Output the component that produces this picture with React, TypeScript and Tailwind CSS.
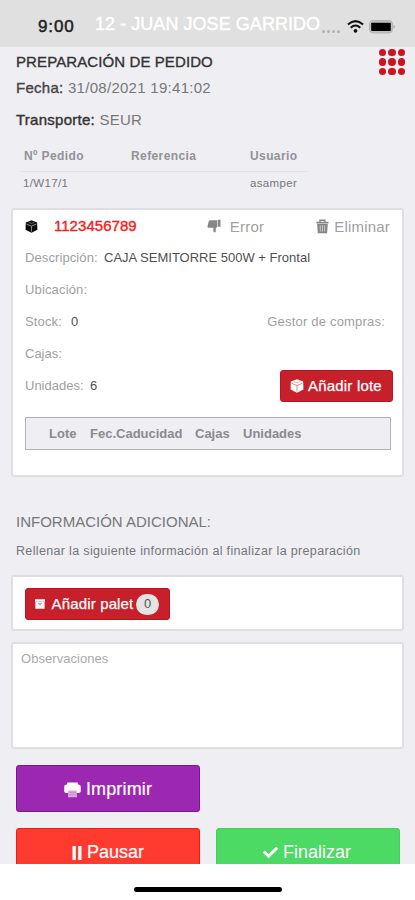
import React from "react";
import { FaCheck } from "react-icons/fa";

function CubeIcon({ className, line }: { className: string; line: string }) {
  return (
    <svg viewBox="0 0 14 14" className={className}>
      <path fill="currentColor" d="M7 0.2 13.2 2.6 13.4 10.6 7 13.8 0.6 10.6 0.8 2.6Z" />
      <path fill="none" stroke={line} strokeWidth="1" d="M1.5 4.2 7 6.6 12.5 4.2M7 6.6V12.6" />
      <path fill="none" stroke={line} strokeWidth="0.7" d="M4 2.6 7 3.7 10 2.6" />
    </svg>
  );
}

function ThumbsDownIcon() {
  return (
    <svg viewBox="0 0 14 14" className="h-[14px] w-[14px]">
      <path fill="#878787" d="M3.2 1.2H10.4V7.6L8.8 9.4V12.6Q8.6 13.6 7.4 13.4Q6.4 13.2 6.4 12V8.8H1.6Q0.2 8.6 0.5 7.2L1.6 2.6Q2 1.2 3.2 1.2ZM11 0.6H13.6V7.8H11Z" />
    </svg>
  );
}

function TrashIcon() {
  return (
    <svg viewBox="0 0 13 15" className="h-[15px] w-[13px] text-[#858585]">
      <path fill="none" stroke="currentColor" strokeWidth="1.3" d="M4 3V1.2H9V3" />
      <path fill="currentColor" d="M0.5 2.6H12.5V4.6H0.5ZM1.2 5H11.8L11.2 14.2H1.8Z" />
      <path stroke="#fff" strokeWidth="0.6" d="M4.3 6.3V12.6M6.5 6.3V12.6M8.7 6.3V12.6" />
    </svg>
  );
}

function PrinterIcon() {
  return (
    <svg viewBox="0 0 17 16" className="h-4 w-[17px]">
      <path fill="#fff" d="M3.2 0.5H13.8V3H3.2ZM2.3 2.6H14.7Q16.8 3 16.8 5V9.2Q16.8 11 14.7 11H2.3Q0.2 11 0.2 9.2V5Q0.2 3 2.3 2.6Z" />
      <path fill="#d9a9e0" d="M4.2 8.5H12.8L13 15.3H4Z" />
      <path stroke="#c27ccd" strokeWidth="0.7" d="M5 10.4H12M5 12.6H12" />
    </svg>
  );
}

function ArchiveIcon() {
  return (
    <svg viewBox="0 0 10 10" className="h-[10px] w-[10px]">
      <path fill="#fff" d="M0 0.2H10V2.8H0ZM0.4 3.1H9.6V9.8H0.4Z" />
      <path fill="none" stroke="#c8202b" strokeWidth="0.9" d="M3.4 4.6 5 5.4 6.6 4.6" />
    </svg>
  );
}

function StatusBar() {
  return (
    <header className="flex h-[47px] items-start bg-[#e0e0e0]">
      <span className="ml-[38px] mt-[16px] w-[57px] text-[17px] leading-[22px] tracking-[0.9px] text-[#222] [-webkit-text-stroke:0.5px_#222]">9:00</span>
      <span className="mt-[13px] w-[227px] text-[18px] leading-[22px] tracking-[0.05px] text-white [-webkit-text-stroke:0.4px_#fff]">12 - JUAN JOSE GARRIDO</span>
      <div className="mt-[30px] flex w-[25px] gap-[2px]">
        {[0, 1, 2, 3].map((i) => (
          <i key={i} className="size-[3px] rounded-full bg-[#b3b3b3]" />
        ))}
      </div>
      <svg viewBox="0 0 17 13" className="mt-[20px] h-[13px] w-[17px]">
        <path fill="none" stroke="#111" strokeWidth="2" d="M0.9 4.5Q8.5 -2.3 16.1 4.5M3.7 7.7Q8.5 3.4 13.3 7.7" />
        <circle cx="8.5" cy="10.8" r="1.9" fill="#111" />
      </svg>
      <svg viewBox="0 0 27 14" className="ml-[5px] mt-[20px] h-[14px] w-[27px]">
        <rect x="0.5" y="0.5" width="23" height="12.5" rx="3.5" fill="#c2c2c2" stroke="#b4b4b4" />
        <rect x="2.2" y="2.8" width="19.6" height="8.2" rx="0.8" fill="#000" />
        <path fill="#999" d="M24.6 4.4Q27 6.7 24.6 9Z" />
      </svg>
    </header>
  );
}

export default function App() {
  return (
    <div className="flex h-[900px] w-[415px] flex-col overflow-hidden bg-white font-['Liberation_Sans',Arial,sans-serif] whitespace-nowrap">
      <StatusBar />
      <main className="h-[817px] overflow-hidden bg-[#efeef3] text-[#777]">
        <div className="flex h-[28px] justify-between pl-[16px] pr-[10px]">
          <h1 className="mt-[5px] text-[15px] leading-[20px] tracking-[0.1px] text-[#333] [-webkit-text-stroke:0.35px_#333]">PREPARACIÓN DE PEDIDO</h1>
          <div className="mt-[2px] grid size-[26px] grid-cols-3 gap-[2px]">
            {[0, 1, 2, 3, 4, 5, 6, 7, 8].map((i) => (
              <i key={i} className="rounded-full bg-[#cc1420]" />
            ))}
          </div>
        </div>
        <p className="mt-[3px] pl-[16px] text-[15px] leading-[20px] tracking-[0.28px]"><span className="text-[#444] [-webkit-text-stroke:0.35px_#444]">Fecha:</span> 31/08/2021 19:41:02</p>
        <p className="mt-[12px] pl-[16px] text-[15px] leading-[20px] tracking-[0.26px]"><span className="text-[#333] [-webkit-text-stroke:0.4px_#333]">Transporte:</span> SEUR</p>

        <div className="ml-[20px] mt-[18px] grid w-[288px] grid-cols-[73px_153px_62px] text-[12px] font-bold leading-[16px] tracking-[0.4px] text-[#929297]">
          <span className="pl-[4px]">Nº Pedido</span>
          <span className="pl-[38px]">Referencia</span>
          <span className="pl-[4px]">Usuario</span>
        </div>
        <div className="ml-[20px] mt-[7px] grid w-[288px] grid-cols-[73px_153px_62px] border-t border-[#e4e3e8] pt-[3px] text-[11.5px] leading-[16px] tracking-[0.35px] text-[#77777b]">
          <span className="pl-[3px]">1/W17/1</span>
          <span />
          <span className="pl-[4px]">asamper</span>
        </div>

        <section className="mx-[11px] mt-[17px] h-[269px] rounded-[3px] border-2 border-[#dfdfe3] bg-white px-[12px] text-[13px] leading-[16px] text-[#a0a0a0]">
          <div className="flex h-[32px] items-center">
            <CubeIcon className="h-[13px] w-[13px] text-[#0a0a0a]" line="#999" />
            <span className="ml-[16px] w-[154px] text-[15px] tracking-[0.05px] text-[#f51d20] [-webkit-text-stroke:0.4px_#f51d20]">1123456789</span>
            <ThumbsDownIcon />
            <span className="ml-[9px] w-[87px] pt-[1px] text-[15px] tracking-[0.2px]">Error</span>
            <TrashIcon />
            <span className="ml-[5px] pt-[1px] text-[15px] tracking-[0.2px]">Eliminar</span>
          </div>
          <div className="flex h-[32px] items-center"><span className="w-[79px] tracking-[0.1px]">Descripción:</span><span className="text-[#505050]">CAJA SEMITORRE 500W + Frontal</span></div>
          <div className="flex h-[32px] items-center tracking-[0.15px]">Ubicación:</div>
          <div className="flex h-[32px] items-center"><span className="w-[46px] tracking-[0.15px]">Stock:</span><span className="text-[#505050]">0</span><span className="ml-auto mr-[5px] tracking-[0.2px]">Gestor de compras:</span></div>
          <div className="flex h-[32px] items-center">Cajas:</div>
          <div className="flex h-[32px] items-center"><span className="w-[65px]">Unidades:</span><span className="text-[#505050]">6</span>
            <button className="-mr-[3px] -mt-px ml-auto flex h-[32px] w-[113px] items-center rounded-[3px] border border-[#b91520] bg-[#c8202b] pl-[9px] text-[15px] tracking-[0.2px] text-white [-webkit-text-stroke:0.25px_#fff]">
              <CubeIcon className="mr-[4px] h-[14px] w-[14px]" line="#e0868c" />Añadir lote
            </button>
          </div>
          <div className="mt-[15px] flex h-[33px] w-[366px] items-center border border-[#b0b0b4] bg-[#efeef3] pl-[23px] text-[13px] font-bold text-[#8a8a8f]">
            <span className="w-[41px]">Lote</span><span className="w-[105px]">Fec.Caducidad</span><span className="w-[48px]">Cajas</span><span>Unidades</span>
          </div>
        </section>

        <h2 className="mt-[35px] pl-[16px] text-[15px] leading-[20px]">INFORMACIÓN ADICIONAL:</h2>
        <p className="mt-[11px] pl-[16px] text-[12.5px] leading-[16px] tracking-[0.34px] text-[#757579]">Rellenar la siguiente información al finalizar la preparación</p>

        <section className="mx-[11px] mt-[16px] h-[56px] rounded-[3px] border-2 border-[#dfdfe3] bg-white pl-[12px] pt-[11px]">
          <button className="flex h-[32px] w-[145px] items-center rounded-[3px] border border-[#b91520] bg-[#c8202b] pl-[9px] text-[15px] text-white [-webkit-text-stroke:0.25px_#fff]">
            <ArchiveIcon /><span className="ml-[4px] w-[87px] tracking-[0.15px]">Añadir palet</span>
            <span className="flex h-[21px] w-[23px] items-center justify-center rounded-full bg-[#e3e3e3] text-[13px] text-[#555] [-webkit-text-stroke:0]">0</span>
          </button>
        </section>
        <section className="mx-[11px] mt-[11px] h-[107px] rounded-[3px] border-2 border-[#dfdfe3] bg-white pl-[8px] pt-[7px] text-[13px] leading-[16px] tracking-[0.05px] text-[#aaa]">Observaciones</section>

        <div className="mt-[16px] grid grid-cols-[184px_184px] gap-x-[16px] gap-y-[16px] pl-[16px] text-[18px] text-white">
          <button className="flex h-[47px] items-center justify-center rounded-[3px] border border-[#85119a] bg-[#9c27b0] pt-[2px] [-webkit-text-stroke:0.2px_#fff]">
            <PrinterIcon /><span className="ml-[5px] tracking-[0.15px]">Imprimir</span>
          </button>
          <span />
          <button className="flex h-[47px] items-center justify-center rounded-[3px] border border-[#ee1c14] bg-[#ff3b30] pt-[2px] [-webkit-text-stroke:0.2px_#fff]">
            <svg viewBox="0 0 10 14" className="h-[14px] w-[10px]"><path fill="#fff" d="M0.5 0H3.8V14H0.5ZM6.2 0H9.5V14H6.2Z" /></svg>
            <span className="ml-[5px]">Pausar</span>
          </button>
          <button className="flex h-[47px] items-center justify-center rounded-[3px] border border-[#43d158] bg-[#4cd964] pr-[2px] pt-[2px]">
            <FaCheck className="h-[15px] w-[15px]" /><span className="ml-[5px]">Finalizar</span>
          </button>
        </div>
      </main>
      <footer className="flex h-[36px] justify-center pt-[23px]">
        <div className="h-[5px] w-[148px] rounded-full bg-black" />
      </footer>
    </div>
  );
}
